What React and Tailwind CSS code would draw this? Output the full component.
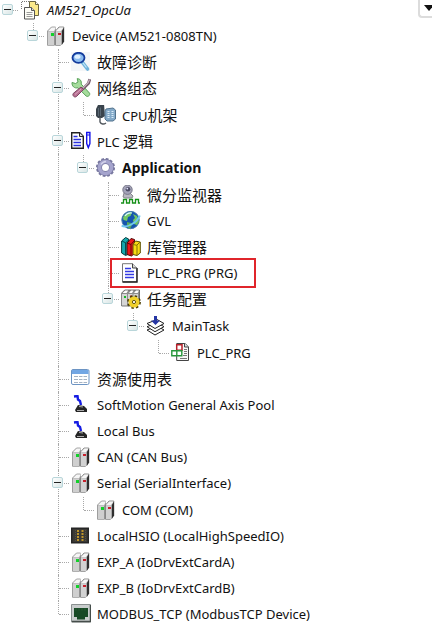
import React, { useState } from "react";

function Svg({ children }) {
  return (
    <svg viewBox="0 0 20 20" className="block h-5 w-5" aria-hidden="true">
      {children}
    </svg>
  );
}

function Towers() {
  return (
    <>
      <path d="M1.500 5 5.500 1H9.500v17L8.500 19.300h-7z" fill="#b4b4b4" stroke="#8f8f8f" strokeWidth=".8" />
      <path d="M2 5.500h6V19H2z" fill="#cfcfcf" />
      <path d="m2.200 5 3.500-3.500H10L8 5z" fill="#f6f6f6" />
      <path d="M9.500 5 13 1h4.800v14.500l-3.300 3.800h-5z" fill="#bdbdbd" stroke="#777" strokeWidth=".8" />
      <path d="M10 5.500h5.500V19H10z" fill="#d2d2d2" />
      <path d="m10 5 3.500-3.500h4L15 5z" fill="#f6f6f6" />
      <path d="M18 1.500v14l-2.200 3.500V5z" fill="#2f2f2f" />
      <path d="M8.200 5.500h1.300V19H8.200z" fill="#8c8c8c" />
    </>
  );
}

const icons = {
  project: (
    <Svg>
      <path d="M.5 9V1.500H8" fill="none" stroke="#777" strokeDasharray="1 1" />
      <path d="M8.500 1.500h6l3 3v11h-9z" fill="#fbe98a" stroke="#6b6542" />
      <path d="M14.500 1.500v3h3" fill="#fff" stroke="#6b6542" />
      <path d="M3.500 7.500h7l3 3v8.500h-10z" fill="#fdfdf6" stroke="#555" />
      <path d="M10.500 7.500v3h3" fill="#ddd" stroke="#555" />
      <path d="M5.500 12.500h6M5.500 14.500h6M5.500 16.500h6" stroke="#9a9a9a" />
    </Svg>
  ),
  device: (
    <Svg>
      <Towers />
      <path d="M5 7h3v3H5z" fill="#12d12a" />
      <path d="M12 7h3v2h-3z" fill="#c61f2b" />
    </Svg>
  ),
  search: (
    <Svg>
      <path d="M0 0h19v19H0z" fill="#f4f6f8" />
      <path d="m11.500 10.500 5 6.500" stroke="#6fb4dc" strokeWidth="3.600" strokeLinecap="round" />
      <path d="m12 11 3.500 4.500" stroke="#c9e9f8" strokeWidth="1.200" />
      <ellipse cx="7.500" cy="5.800" rx="6" ry="5" fill="#8bbcf0" stroke="#123a9c" strokeWidth="1.800" />
      <ellipse cx="6.500" cy="4.700" rx="3" ry="2" fill="#dff0ff" />
    </Svg>
  ),
  tools: (
    <Svg>
      <path
        d="M1 4.500 4.500 5.500 7 4 6.200.6c3.200.2 4.600 2.500 4 5.500l8.300 9c1 2-1.500 4.200-3.300 3L7 9.800C3.500 10.500.8 8.500 1 4.500z"
        fill="#a5dc9c"
        stroke="#58a158"
      />
      <path d="m18.800 1.200-1.300 4-6 6" fill="none" stroke="#735a6a" strokeWidth="3" />
      <path d="m18.500 1.500-1.500 3.500-6 6" fill="none" stroke="#c9b5c2" strokeWidth="1.200" />
      <path d="m10 9 2.500 2.500-7 7c-2 1.500-4.500-1-3.300-3z" fill="#b86f92" stroke="#7b4863" />
      <path d="m10 11-6 5.500" stroke="#dca9c1" />
    </Svg>
  ),
  rack: (
    <Svg>
      <path d="m2 0 6-1 1 12-3 2H2L0 11V4z" fill="#39434c" />
      <path d="M2.500 3v8M4.500 2.500V11" stroke="#596773" />
      <path d="M4 12v5c1 2.500 4 2.500 6 1" fill="none" stroke="#50565c" strokeWidth="1.400" />
      <path d="m10 4 7-1 2.500 2v9L17 16h-6l-2-2V6z" fill="#83a9c8" stroke="#53738d" />
      <path d="M12.500 6v8M16.500 6v8" stroke="#d9ecf8" strokeDasharray="1 1" strokeWidth="2" />
    </Svg>
  ),
  logic: (
    <Svg>
      <path d="M.7 1.700h8l3.600 3.600v12H.7z" fill="#fff" stroke="#222" strokeWidth="1.400" />
      <path d="M8.500 1.700v3.800h3.800" fill="#ddd" stroke="#222" />
      <path d="M2.500 5.500h4M2.500 8.500h7.500M2.500 11.500h7.500M2.500 14.500h7.500" stroke="#2b31df" strokeWidth="1.500" />
      <path d="M15.700 1.500h3.200v11l-1.600 4-1.600-4z" fill="#fff" stroke="#1614ea" strokeWidth="1.400" />
      <path d="M15.500 4h3.500" stroke="#1614ea" />
    </Svg>
  ),
  gear: (
    <Svg>
      <circle cx="9.500" cy="9.500" r="8.300" fill="none" stroke="#77779f" strokeWidth="2.500" strokeDasharray="2.600 1.745" />
      <circle cx="9.500" cy="9.500" r="6" fill="none" stroke="#77779f" strokeWidth="5" />
      <circle cx="9.500" cy="9.500" r="6" fill="none" stroke="#a5a4cd" strokeWidth="3.600" />
      <path d="M5 6.500a6 6 0 0 1 5-3" fill="none" stroke="#d2d2ea" strokeWidth="1.500" />
    </Svg>
  ),
  trace: (
    <Svg>
      <path d="m3 8-1 4 2 1h7l1-2-3-3" fill="#b8b8c0" stroke="#85858c" />
      <circle cx="6.500" cy="4.700" r="4.700" fill="#a4a3b8" stroke="#777789" />
      <circle cx="7" cy="4.300" r="2.300" fill="#4d4d65" />
      <circle cx="6.300" cy="3.600" r=".9" fill="#e4e4ff" />
      <path d="M0 18h2.500v-3.500h3V18h3v-3.500h3V18h3v-3.500h3V18H19" fill="none" stroke="#159018" strokeWidth="1.300" />
    </Svg>
  ),
  globe: (
    <Svg>
      <circle cx="9.500" cy="9" r="8.700" fill="#1555ae" stroke="#477aac" />
      <path d="M2 6.500C4 2 8 .7 11 1.500L9.500 5 7 6l-1 4-3.500-1zM12 3l4 2 2 5-2 4-3-1-1-4 2-2z" fill="#71c863" />
      <path d="m6 11 4 1 1 2-2 4-3-2z" fill="#5cae58" />
      <path d="M.7 14.500C5 18 17 11 18.700 4.500" fill="none" stroke="#70c8ee" strokeWidth="2" />
      <path d="M4 5C6 2 9 1.500 11 2" fill="none" stroke="#d4f5ff" strokeWidth="1.200" />
    </Svg>
  ),
  library: (
    <Svg>
      <path d="m.6 4 4-3.500 3 1.500v15l-3 1.500-4-2.500z" fill="#15a9ae" stroke="#083d3e" />
      <path d="m1 4 3.500 1.800V18M4.500 6l3-3" fill="none" stroke="#084d50" />
      <path d="m6 6 4-4.500 3.500 1v14L10.500 19 6 17.500z" fill="#ec171a" stroke="#4f0808" />
      <path d="m6 6 4 1.500V18.500M10 7.500l3.500-4" fill="none" stroke="#630606" />
      <path d="m12 7.500 2.500-3.500 4.800 1v11L16 18.500l-4-1z" fill="#f8dc12" stroke="#5b5006" />
      <path d="m12 7.500 4 .8v10M16 8l3-3" fill="none" stroke="#817007" />
    </Svg>
  ),
  pou: (
    <Svg>
      <path d="M1.500.7h10l4.300 4.300v13.800H1.500z" fill="#fff" stroke="#777" />
      <path d="M16 5v14H1.500" fill="none" stroke="#222" strokeWidth="1.400" />
      <path d="M11.500.7V5H16" fill="#d8d8d8" stroke="#444" />
      <path d="M4 5.500h6M4 8.500h9M4 11.500h9M4 14.500h9" stroke="#333be4" strokeWidth="1.500" />
    </Svg>
  ),
  tasks: (
    <Svg>
      <path d="m.7 4 3-3h14.800v13l-3 3H.7z" fill="#8e8e8e" stroke="#555" strokeWidth=".8" />
      <path d="M1 5h5v11.500H1zM7 5h4.500v11.500H7zM12.500 5H17v11.500h-4.500z" fill="#d5d5d5" />
      <path d="m1.500 4 2.700-2.500h3L5.500 4zM8 4l2-2.500h2.500L11 4zM13 4l2-2.500h3L16.500 4z" fill="#fff" />
      <path d="M3 7h2v2H3z" fill="#12ba26" />
      <path d="M9 6.500h2v2H9z" fill="#c61f2b" />
      <circle cx="13" cy="13" r="5.400" fill="none" stroke="#4a3d00" strokeWidth="3" strokeDasharray="2.200 2.040" />
      <circle cx="13" cy="13" r="3.800" fill="none" stroke="#f0d02a" strokeWidth="3.400" />
      <circle cx="13" cy="13" r="1.600" fill="#fff" stroke="#665600" />
    </Svg>
  ),
  task: (
    <Svg>
      <path d="m1 14 10-4 7 4-9 5z" fill="#fff" stroke="#222" />
      <path d="m1 10.700 10-4 7 4-9 5z" fill="#fff" stroke="#222" />
      <path d="m1 7.500 10-4 7 4-9 5z" fill="#fff" stroke="#222" />
      <path d="M8 0h3v4.500h3L9.500 9 5 4.500h3z" fill="#2636a5" />
    </Svg>
  ),
  call: (
    <Svg>
      <path d="M5.700.5h8.500L17.500 4v13.500H5.700z" fill="#f8f8f8" stroke="#444" />
      <path d="M13.500.5V4h4" fill="#ddd" stroke="#444" />
      <path d="M13 6.500h3M13 8.500h3M13 10.500h3M12 12.500h4M9 15.500h7" stroke="#777" />
      <path d="M5.700 1.800h5.300v5.500H5.700z" fill="#fff" stroke="#b7202a" strokeWidth="1.500" />
      <path d="M.8 7.700h5v5h-5zM5.800 7.700h5v5h-5z" fill="#fff" stroke="#26963b" strokeWidth="1.400" />
    </Svg>
  ),
  table: (
    <Svg>
      <rect x=".5" y=".5" width="17.500" height="15" rx="1.500" fill="#fff" stroke="#6c94c3" />
      <path d="M1 1h16.500v4H1z" fill="#73a7e4" />
      <path d="M3 7.500h4M8 7.500h3.500M12.500 7.500H16M3 10.500h4M8 10.500h3.500M12.500 10.500H16M3 13.500h4M8 13.500h3.500M12.500 13.500H16" stroke="#a6b3c3" />
    </Svg>
  ),
  bus: (
    <Svg>
      <path d="M3 1.500 6.500 1 7 4.500 9 6l1 4" fill="none" stroke="#151ce3" strokeWidth="2.400" />
      <path d="m7 10 6 1 3 3v3H5l-1-2z" fill="#252525" />
      <path d="m8 11.500 4 .5M6 15.500h7" stroke="#aaa" />
    </Svg>
  ),
  hsio: (
    <Svg>
      <path d="M0 1.500h18v16H0z" fill="#252525" />
      <path d="M1.500 3h15v13h-15z" fill="#3b3935" />
      <path d="M7 4v11.500M11.500 4v11.500" stroke="#bd942a" strokeWidth="2" strokeDasharray="2 1" />
      <path d="M4.500 4v11M14.500 4v11" stroke="#54513f" strokeDasharray="1 1" />
    </Svg>
  ),
  ethernet: (
    <Svg>
      <path d="M.5.500h19v17.500H.5z" fill="#c9cdcd" stroke="#8a9090" />
      <path d="M1 17.500h18.500V1" fill="none" stroke="#454d4a" strokeWidth="1.500" />
      <path d="M3 4h14v9h-3v2.500H6V13H3z" fill="#174925" />
      <path d="M5 4.500v2M8 4.500v2M11 4.500v2M14 4.500v2" stroke="#2a5c37" />
    </Svg>
  ),
};

const tree = {
  icon: "project",
  text: "AM521_OpcUa",
  style: "italic",
  children: [
    {
      icon: "device",
      text: "Device (AM521-0808TN)",
      children: [
        { icon: "search", cjk: "故障诊断" },
        { icon: "tools", cjk: "网络组态", children: [{ icon: "rack", text: "CPU", cjk: "机架" }] },
        {
          icon: "logic",
          text: "PLC ",
          cjk: "逻辑",
          children: [
            {
              icon: "gear",
              text: "Application",
              style: "text-sm font-bold",
              children: [
                { icon: "trace", cjk: "微分监视器" },
                { icon: "globe", text: "GVL" },
                { icon: "library", cjk: "库管理器" },
                { icon: "pou", text: "PLC_PRG (PRG)", marked: true },
                {
                  icon: "tasks",
                  cjk: "任务配置",
                  children: [
                    { icon: "task", text: "MainTask", children: [{ icon: "call", text: "PLC_PRG" }] },
                  ],
                },
              ],
            },
          ],
        },
        { icon: "table", cjk: "资源使用表" },
        { icon: "bus", text: "SoftMotion General Axis Pool" },
        { icon: "bus", text: "Local Bus" },
        { icon: "device", text: "CAN (CAN Bus)" },
        { icon: "device", text: "Serial (SerialInterface)", children: [{ icon: "device", text: "COM (COM)" }] },
        { icon: "hsio", text: "LocalHSIO (LocalHighSpeedIO)" },
        { icon: "device", text: "EXP_A (IoDrvExtCardA)" },
        { icon: "device", text: "EXP_B (IoDrvExtCardB)" },
        { icon: "ethernet", text: "MODBUS_TCP (ModbusTCP Device)" },
      ],
    },
  ],
};

function Node({ node, depth, last }) {
  const [open, setOpen] = useState(true);
  const name = (node.text || "") + (node.cjk || "");
  return (
    <li role="treeitem" aria-label={name} aria-expanded={node.children ? open : undefined}>
      <div className="relative flex h-[26px] items-center">
        <div className="flex h-full w-[21px] shrink-0 pl-2">
          {depth > 0 && (
            <span className={`w-0 border-l border-dotted border-[#a8a8a8] ${last ? "h-1/2" : "h-full"}`} />
          )}
          <span className="w-2.5 self-center border-t border-dotted border-[#a8a8a8]" />
        </div>
        {node.children && (
          <button
            type="button"
            aria-label={(open ? "Collapse " : "Expand ") + name}
            onClick={() => setOpen(!open)}
            className="absolute left-0.5 top-[7px] flex h-[11px] w-[11px] items-center justify-center rounded-xs border border-[#b9d6da] bg-linear-to-br from-white to-[#d9e6e6]"
          >
            <span className="h-px w-[7px] bg-[#222]" />
            {!open && <span className="absolute h-[7px] w-px bg-[#222]" />}
          </button>
        )}
        <span className="w-5 shrink-0">{icons[node.icon]}</span>
        <span className={`ml-1.5 whitespace-pre ${node.style || ""}`}>
          {node.text}
          {node.cjk && <span className="text-[15px]">{node.cjk}</span>}
        </span>
        {node.marked && (
          <span className="pointer-events-none absolute -inset-y-0.5 left-2.5 w-[146px] border-2 border-[#e0252b]" />
        )}
      </div>
      {node.children && open && (
        <div className="flex">
          <div className="w-[25px] shrink-0 pl-2">
            {depth > 0 && !last && <div className="h-full w-0 border-l border-dotted border-[#a8a8a8]" />}
          </div>
          <ul role="group" className={`flex-1 ${depth > 1 ? "pt-px" : ""}`}>
            {node.children.map((child, i) => (
              <Node key={i} node={child} depth={depth + 1} last={i === node.children.length - 1} />
            ))}
          </ul>
        </div>
      )}
    </li>
  );
}

export default function App() {
  return (
    <div className="flex min-h-screen items-start overflow-hidden bg-white font-['Noto_Sans','Noto_Sans_CJK_SC',sans-serif] text-[13px] leading-5 text-[#111]">
      <ul role="tree" aria-label="Devices" className="-mt-[3px] min-w-0 flex-1">
        <Node node={tree} depth={0} last />
      </ul>
      <button
        type="button"
        aria-label="Tree options"
        className="flex h-[18px] w-3.5 shrink-0 items-center overflow-hidden rounded-bl border-b-2 border-l-2 border-[#dcdcdc] bg-white pl-1"
      >
        <svg viewBox="0 0 10 6" className="h-1.5 w-2.5 shrink-0" aria-hidden="true">
          <path d="M0 0h10L5 6z" fill="#111" />
        </svg>
      </button>
    </div>
  );
}
